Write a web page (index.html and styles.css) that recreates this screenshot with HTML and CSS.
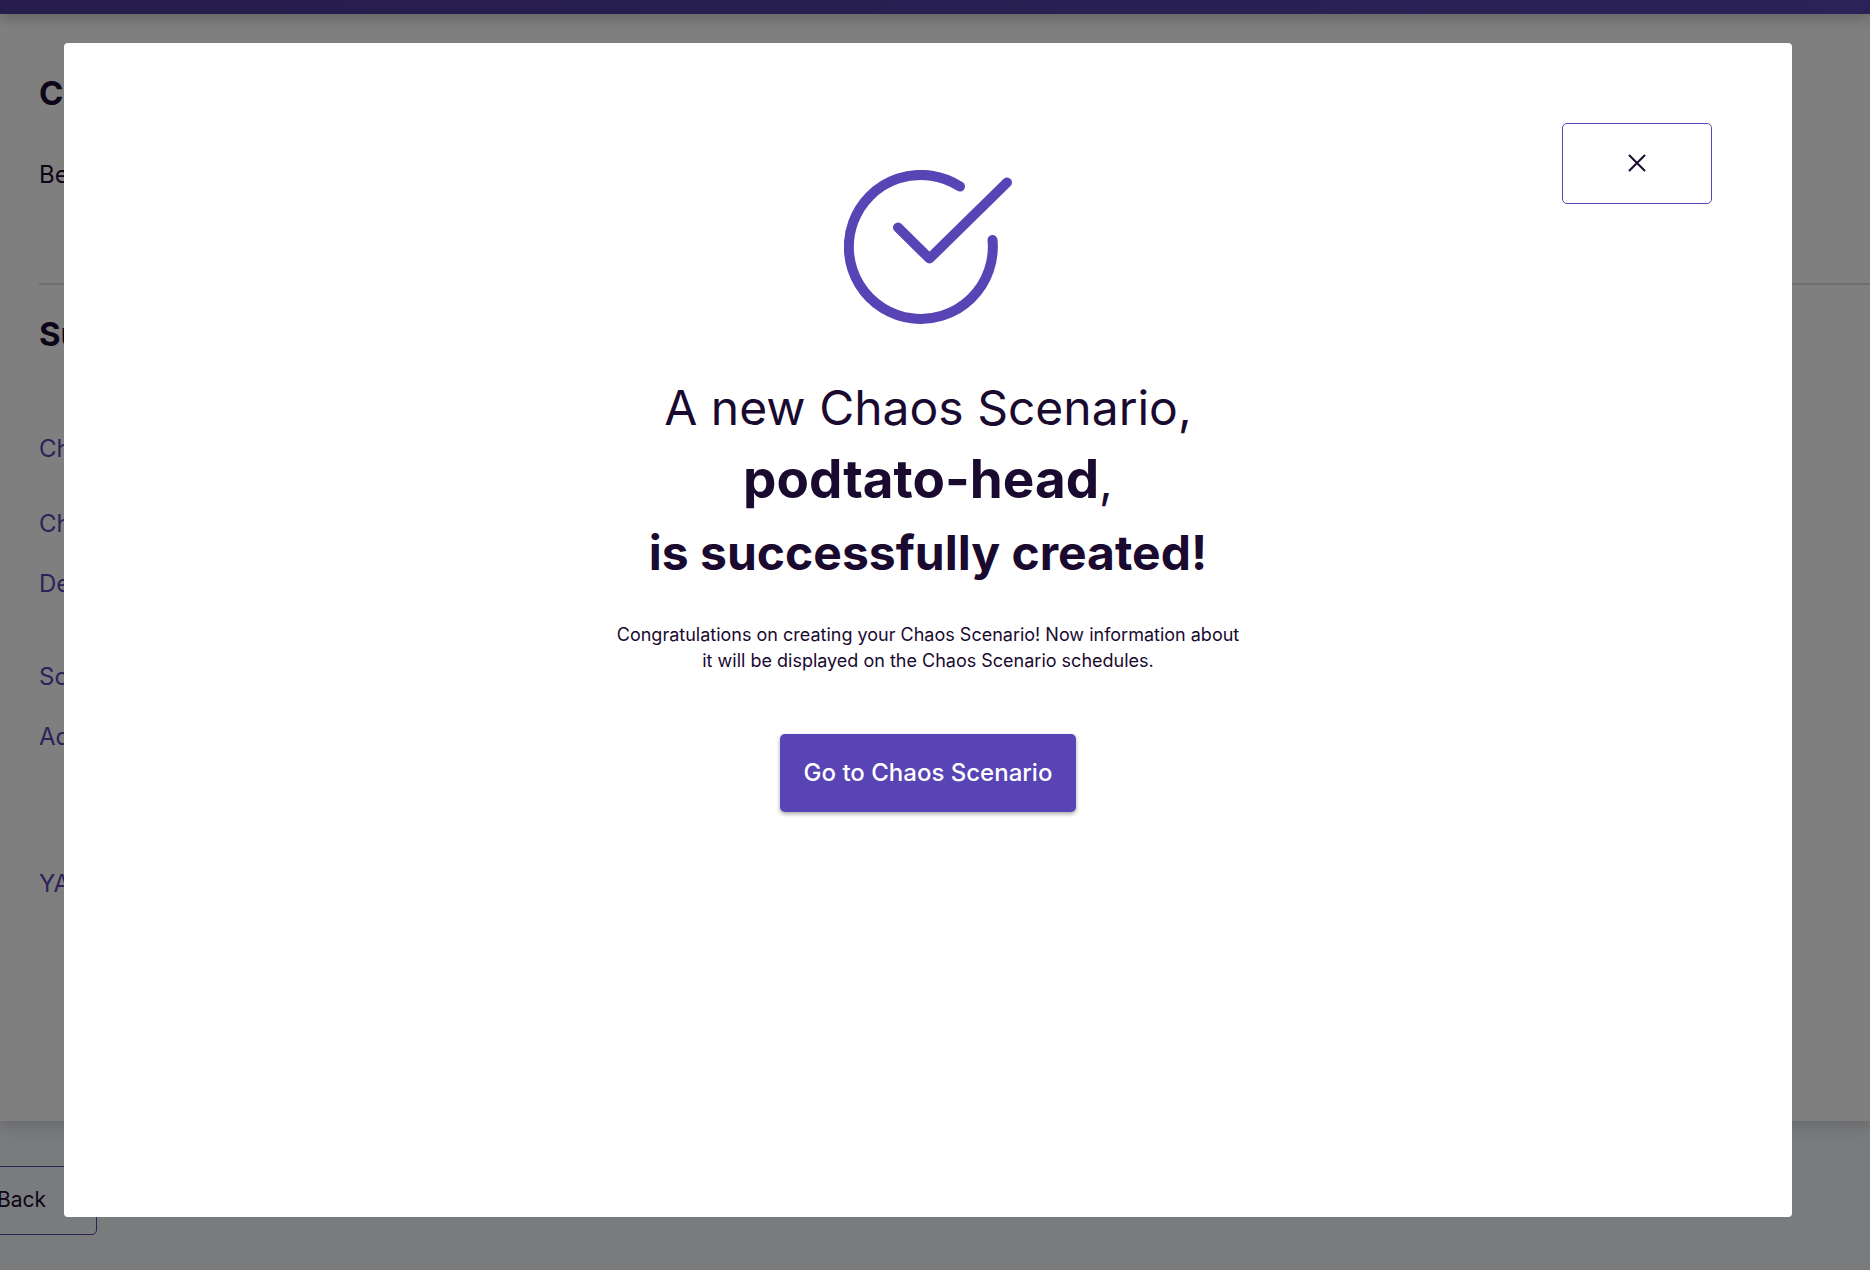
FILE: index.html
```html
<!DOCTYPE html>
<html lang="en">
<head>
  <meta charset="utf-8">
  <meta name="viewport" content="width=device-width, initial-scale=1">
  <title>Chaos Scenario created</title>
  <link rel="stylesheet" href="styles.css">
</head>
<body>
  <div class="page">
    <header class="topbar"></header>
    <main class="card">
      <h1 class="card-title">Confirm and finish</h1>
      <p class="card-text">Before you finish, check your Chaos Scenario.</p>
      <hr class="divider">
      <h2 class="card-title">Summary</h2>
      <ul class="summary">
        <li class="summary-item">Chaos Scenario name</li>
        <li class="summary-item gap-medium">Chaos Infrastructure</li>
        <li class="summary-item">Description</li>
        <li class="summary-item gap-large">Schedule</li>
        <li class="summary-item">Adjusted weights</li>
        <li class="summary-item gap-xlarge">YAML</li>
      </ul>
    </main>
    <footer class="actions">
      <button class="button-back" type="button">Back</button>
    </footer>
  </div>

  <div class="backdrop">
    <section class="modal" role="dialog" aria-modal="true" aria-labelledby="modal-title">
      <button class="button-close" type="button" aria-label="Close">
        <svg class="icon-close" viewBox="0 0 18 18" aria-hidden="true">
          <path d="M1.500 .5 16.500 15.500M16.500 .5 1.500 15.500"/>
        </svg>
      </button>
      <div class="content">
        <svg class="icon-check" viewBox="0 0 168 154" aria-hidden="true">
          <path d="M116 16.500A72 72 0 1 0 148.500 70"/>
          <path d="M54 57.500 85.500 88.500 163 12.500"/>
        </svg>
        <h2 class="headline" id="modal-title">
          <span class="line">A new Chaos Scenario,</span>
          <span class="line"><strong class="name">podtato-head</strong>,</span>
          <strong class="line">is successfully created!</strong>
        </h2>
        <p class="message">Congratulations on creating your Chaos Scenario! Now information about it will be displayed on the Chaos Scenario schedules.</p>
        <button class="button-primary" type="button">Go to Chaos Scenario</button>
      </div>
    </section>
  </div>
</body>
</html>
```

FILE: styles.css
```css
:root {
  --primary: #5844b4;
  --text: #1a0a30;
}

* {
  box-sizing: border-box;
}

body {
  margin: 0;
  overflow: hidden;
  background: #f4f6f9;
  color: var(--text);
  font-family: Inter, "Liberation Sans", sans-serif;
}

button {
  font-family: inherit;
  cursor: pointer;
}

.page {
  display: flex;
  flex-direction: column;
  min-height: 100vh;
}

.topbar {
  height: 14px;
  background: linear-gradient(90deg, #4c3a98, #5644b0);
  box-shadow: 0 4px 14px rgba(0, 0, 0, 0.25);
  z-index: 1;
}

.card {
  min-height: 1107px;
  padding: 59px 0 0 39px;
  background: #fff;
  box-shadow: 0 4px 16px rgba(0, 0, 0, 0.18);
}

.card-title {
  margin: 0;
  font-size: 33px;
  line-height: 40px;
  font-weight: 700;
}

.card-text {
  margin: 46px 0 92px;
  font-size: 24px;
  line-height: 32px;
}

.divider {
  height: 2px;
  margin: 0 0 29px;
  border: 0;
  background: #e0e0e0;
}

.summary {
  margin: 79px 0 0;
  padding: 0;
  list-style: none;
}

.summary-item {
  margin-top: 28px;
  color: var(--primary);
  font-size: 24px;
  line-height: 32px;
}

.gap-medium {
  margin-top: 43px;
}

.gap-large {
  margin-top: 61px;
}

.gap-xlarge {
  margin-top: 115px;
}

.actions {
  padding-top: 45px;
}

.button-back {
  height: 69px;
  margin-left: -54px;
  padding: 0 50px 2px;
  border: 1px solid var(--primary);
  border-radius: 5px;
  background: transparent;
  color: var(--text);
  font-size: 21px;
}

.backdrop {
  position: fixed;
  inset: 0;
  display: flex;
  padding: 43px 78px 53px 64px;
  background: rgba(0, 0, 0, 0.5);
  z-index: 2;
}

.modal {
  display: flex;
  flex: 1;
  flex-direction: column;
  padding: 80px;
  border-radius: 4px;
  background: #fff;
}

.button-close {
  display: flex;
  align-items: center;
  justify-content: center;
  align-self: flex-end;
  width: 150px;
  height: 81px;
  border: 1px solid var(--primary);
  border-radius: 5px;
  background: transparent;
}

.icon-close {
  width: 18px;
  height: 18px;
  overflow: visible;
  fill: none;
  stroke: var(--text);
  stroke-width: 2;
  stroke-linecap: round;
}

.content {
  display: flex;
  flex-direction: column;
  align-items: center;
  margin-top: -34px;
}

.icon-check {
  width: 168px;
  height: 154px;
  fill: none;
  stroke: var(--primary);
  stroke-width: 10;
  stroke-linecap: round;
  stroke-linejoin: round;
}

.headline {
  margin: 48px 0 0;
  font-size: 48px;
  line-height: 72px;
  font-weight: 400;
  text-align: center;
}

.headline strong {
  font-weight: 700;
}

.line {
  display: block;
}

.headline .name {
  font-size: 53px;
  line-height: 70px;
}

.message {
  max-width: 630px;
  margin: 33px 0 60px;
  font-size: 18px;
  line-height: 26px;
  text-align: center;
}

.button-primary {
  height: 78px;
  padding: 0 24px 2px;
  border: 0;
  border-radius: 5px;
  background: var(--primary);
  box-shadow: 0 2px 4px rgba(0, 0, 0, 0.35);
  color: #fff;
  font-size: 24px;
  font-weight: 500;
}
```
